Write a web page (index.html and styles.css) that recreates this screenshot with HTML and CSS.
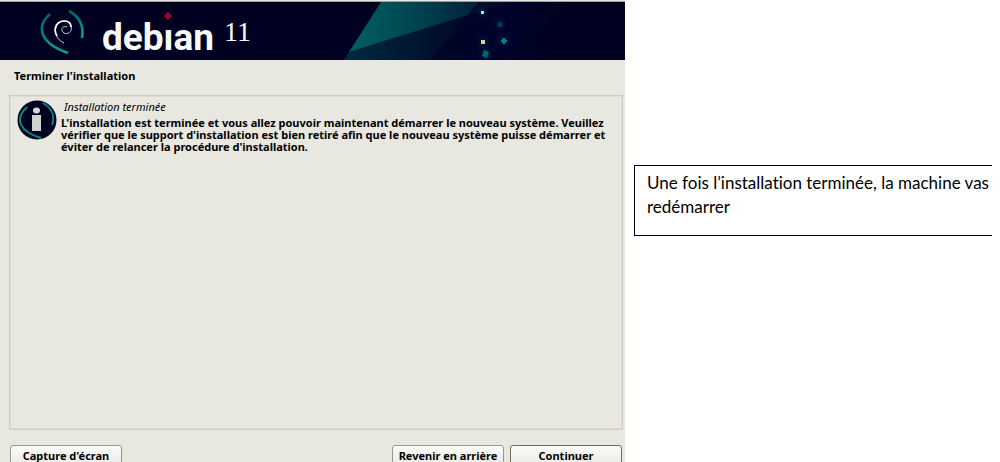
FILE: index.html
```html
<!DOCTYPE html>
<html lang="fr">
<head>
<meta charset="utf-8">
<meta name="viewport" content="width=device-width, initial-scale=1">
<title>Terminer l'installation</title>
<link rel="stylesheet" href="styles.css">
</head>
<body>
<main class="installer">
  <header class="banner">
    <svg class="banner-art" viewBox="0 0 625 58" preserveAspectRatio="xMinYMin slice" role="img" aria-label="debian 11">
      <defs>
        <linearGradient id="beam" x1="0" x2="1"><stop offset="0" stop-color="#006064"/><stop offset=".5" stop-color="#00454f"/><stop offset="1" stop-color="#002036"/></linearGradient>
        <linearGradient id="shade" x1="0" x2="1"><stop offset="0" stop-color="#002a40"/><stop offset=".45" stop-color="#001a36"/><stop offset="1" stop-color="#000828"/></linearGradient>
        <linearGradient id="night" x1="0" x2="1"><stop offset="0" stop-color="#000624"/><stop offset=".5" stop-color="#00022c"/><stop offset="1" stop-color="#00001e"/></linearGradient>
        <linearGradient id="arc" x1="0" y1="0" x2="0" y2="1"><stop offset="0" stop-color="#00636a"/><stop offset="1" stop-color="#00a693"/></linearGradient>
        <radialGradient id="glow"><stop offset="0" stop-color="#006070" stop-opacity=".3"/><stop offset="1" stop-color="#003050" stop-opacity="0"/></radialGradient>
      </defs>
      <path d="M430 58L465 14L480 0H572V23L535 58Z" fill="url(#night)"/>
      <path d="M344 58L349 50L468 13L430 58Z" fill="url(#shade)"/>
      <path d="M381 0H479L468 13L349 50Z" fill="url(#beam)"/>
      <path d="M468 13L479 0H510Z" fill="#000c2a"/>
      <path d="M502 58L553 0H564L514 58Z" fill="#000524"/>
      <g fill="url(#glow)"><circle cx="482" cy="10" r="8"/><circle cx="500" cy="22" r="8"/><circle cx="483" cy="40" r="8"/><circle cx="504" cy="38" r="9"/><circle cx="486" cy="52" r="9"/></g>
      <path d="M481 9h3v3h-3z" fill="#b1dce0"/>
      <path d="M498 20h4v5h-4z" fill="#003a68"/>
      <path d="M481 38h4v4h-4z" fill="#cfd49b"/>
      <path d="M503 36h2v1h1v1h1v2h-1v1h-1v1h-2v-1h-1v-1h-1v-2h1v-1h1z" fill="#087c79"/>
      <path d="M484 48l5 2-2 6-5-2z" fill="#046669"/>
      <g fill="none">
        <path d="M50 12C36 24 39 41 68 51" stroke="url(#arc)" stroke-width="2.4"/>
        <path d="M69 9C80 15 84 24 82 36" stroke="url(#arc)" stroke-width="2.6"/>
        <path d="M64 41C57 38 54 31 56 26C58 18 69 16 71 24C73 30 67 33 64 31C60 29 62 23 67 25" stroke="#c8cbd4" stroke-width="1"/>
        <path d="M57 34C52 25 58 19 64 19C68 19 71 21 71 25" stroke="#fff" stroke-width="1.7"/>
      </g>
      <text class="wordmark" x="102" y="48">debian</text>
      <path d="M163 12h11v14h-11z" fill="#000020"/>
      <path d="M168 10l4 4-4 4-4-4z" fill="#a80030"/>
      <text class="release" x="224" y="39">11</text>
    </svg>
  </header>
  <h1 class="title">Terminer l'installation</h1>
  <section class="panel">
    <svg class="info" viewBox="0 0 40 40" aria-hidden="true">
      <circle cx="20" cy="20" r="19.5" fill="#000020"/>
      <g fill="none" stroke="#00897f"><path d="M10 7C-4 20 4 32 24 38" stroke-width="2"/><path d="M26 3C35 8 38 16 35 25" stroke-width="1.8"/></g>
      <ellipse cx="19.500" cy="10.500" rx="3.500" ry="3" fill="#d5d8d5"/><path d="M15 15h9v16h-9z" fill="#d0d4d0"/>
    </svg>
    <div class="message">
      <h2 class="subtitle">Installation terminée</h2>
      <p class="body-text">L'installation est terminée et vous allez pouvoir maintenant démarrer le nouveau système. Veuillez vérifier que le support d'installation est bien retiré afin que le nouveau système puisse démarrer et éviter de relancer la procédure d'installation.</p>
    </div>
  </section>
  <footer class="actions">
    <button class="button" type="button">Capture d'écran</button>
    <button class="button push" type="button">Revenir en arrière</button>
    <button class="button primary" type="button">Continuer</button>
  </footer>
</main>
<aside class="note"><p>Une fois l’installation terminée, la machine vas redémarrer</p></aside>
</body>
</html>
```
FILE: styles.css
```css
* { box-sizing: border-box; }
body {
  margin: 0;
  height: 100vh;
  overflow: hidden;
  display: flex;
  background: #fff;
  color: #000;
}
h1, h2, p { margin: 0; }
.installer {
  flex: 0 0 62.5%;
  display: flex;
  flex-direction: column;
  overflow: hidden;
  background: #e8e8e0;
  font: bold 11px/12px "Noto Sans", "DejaVu Sans", sans-serif;
}
.banner {
  margin-top: 1px;
  border-top: 1px solid #9a9eaa;
  background: #000020;
}
.banner-art { display: block; width: 100%; }
.wordmark { font: bold 37px Roboto, sans-serif; fill: #f8fbfa; }
.release { font: 28px "Liberation Serif", serif; fill: #f8fbfa; }
.title { padding: 10px 14px 13px; font-size: 11px; }
.panel {
  flex: 1;
  display: flex;
  align-items: flex-start;
  gap: 4px;
  margin: 0 2px 0 9px;
  padding: 4px 16px 4px 7px;
  border: 1px solid #cfcdbf;
  box-shadow: inset 0 0 0 1px #dedcd1;
}
.info { flex: none; width: 40px; height: 40px; }
.message { flex: 1; padding-top: 1px; }
.subtitle { padding-left: 3px; margin-bottom: 4px; font-size: 11px; font-weight: normal; font-style: italic; }
.actions { display: flex; gap: 6px; margin: 15px 3px -8px 10px; }
.button {
  width: 112px;
  height: 25px;
  padding: 0 0 4px;
  border: 1px solid #9b9a84;
  border-radius: 3px;
  background: linear-gradient(#fbfbf7, #eeefec 60%, #e4e4da);
  color: #000;
  font: inherit;
}
.push { margin-left: auto; }
.primary { border-color: #6d6c58; }
.note {
  flex: 1;
  align-self: flex-start;
  margin: 165px 8px 0 9px;
  padding: 5px 0 16px 12px;
  border: 1px solid #000;
  border-right: 0;
  font: 17px/24px Lato, sans-serif;
  font-variant-ligatures: none;
}
```
